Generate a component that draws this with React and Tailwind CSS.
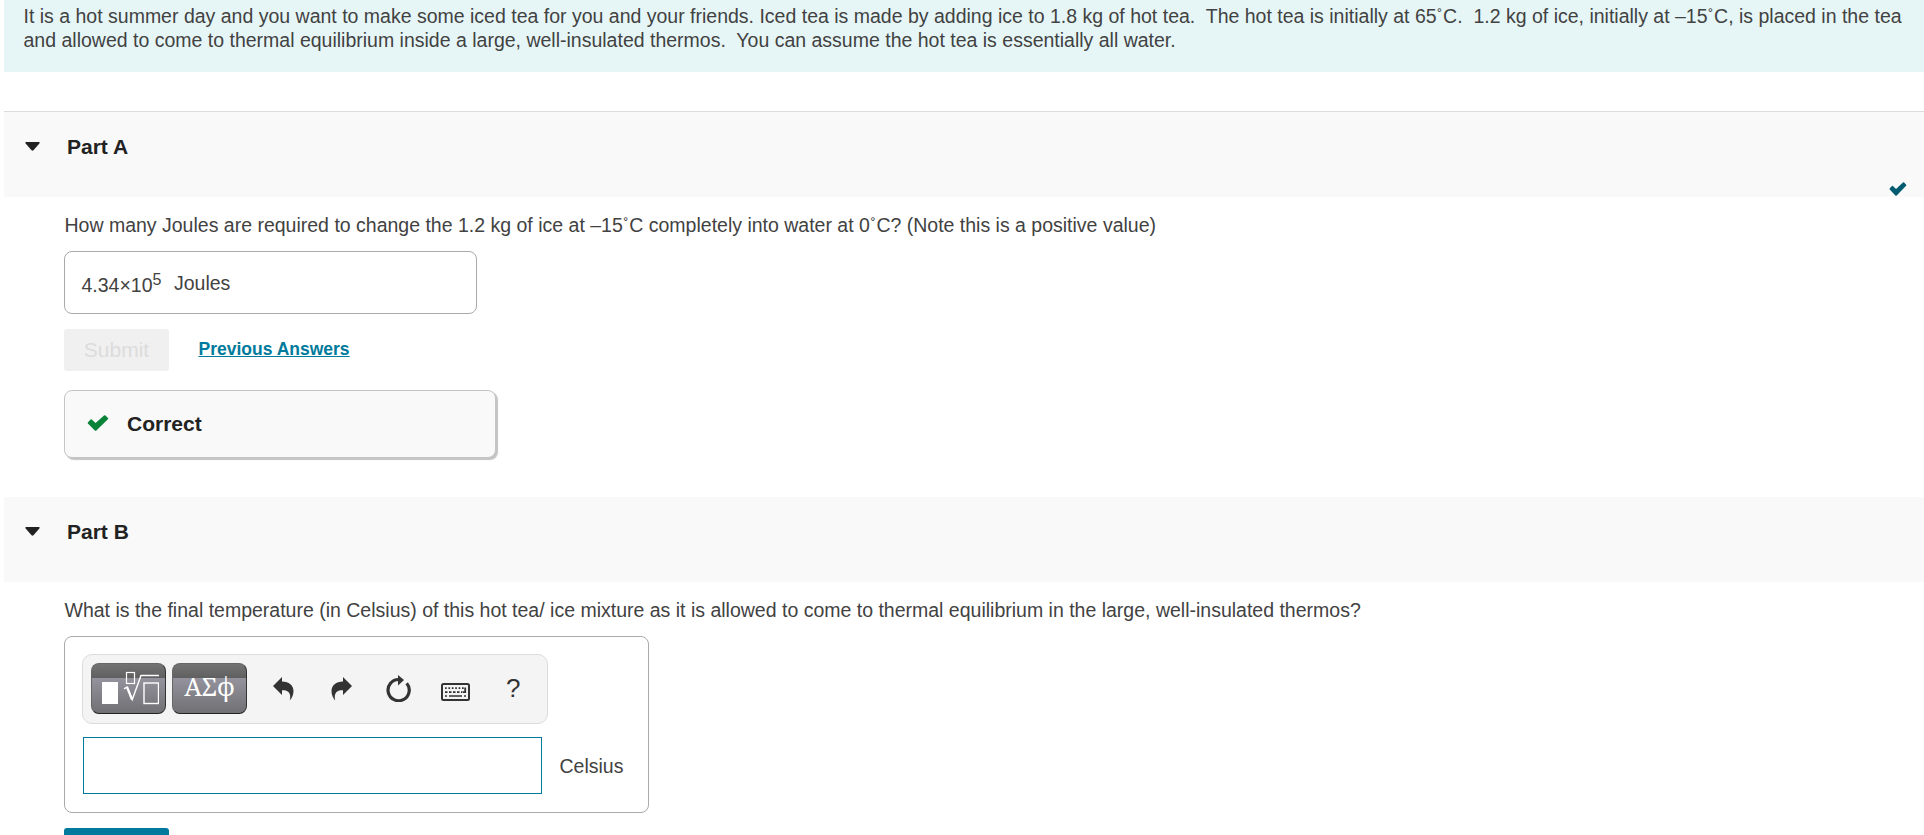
function CheckIcon({ className }) {
  return (
    <svg className={className} viewBox="0 0 22 16" preserveAspectRatio="none" fill="currentColor">
      <path d="M1 7.2 3.6 4.6Q4.2 4.1 4.8 4.6L8.6 8 17 .5Q17.8-.1 18.5.5L21 3Q21.5 3.6 20.9 4.2L9.4 15.5Q8.6 16.2 7.8 15.5L.9 8.5Q.4 7.8 1 7.2Z" />
    </svg>
  );
}

function UndoIcon({ className }) {
  return (
    <svg className={className} viewBox="0 0 21 24" fill="#333">
      <path d="M0 9 9 0V4.500C16 4.500 20.500 8.500 20.500 14 20.500 18 19 21 16.800 23.500 17.800 19.500 17 16.500 15.500 15 14 13.500 12 13.200 9 13.200V18Z" />
    </svg>
  );
}

function ResetIcon() {
  return (
    <svg className="h-[27px] w-[25px]" viewBox="0 0 25 27">
      <path d="M13 4.500A10.600 10.600 0 1 0 20.700 8.200" fill="none" stroke="#333" strokeWidth="3.200" />
      <path d="M12 0 18 5 12 10.500Z" fill="#333" />
    </svg>
  );
}

function KeyboardIcon() {
  return (
    <svg className="h-[18px] w-[29px]" viewBox="0 0 29 18" fill="none" stroke="#333">
      <rect x="1" y="1" width="27" height="16" rx="1.500" strokeWidth="2" />
      <path d="M4 5.200H23" strokeWidth="1.700" strokeDasharray="1.700 1.700" />
      <path d="M4 9.200H21" strokeWidth="1.700" strokeDasharray="2.500 1.500" />
      <path d="M4 13H6M8 13H21M23 13H25" strokeWidth="1.700" />
      <path d="M24.200 4.400V9.200H21.500" strokeWidth="1.800" />
    </svg>
  );
}

function TemplateIcon() {
  return (
    <svg className="h-[34px] w-[58px]" viewBox="0 0 58 34" fill="none" stroke="#fff">
      <rect x="1" y="11" width="16" height="22" fill="#fff" stroke="none" />
      <rect x="25.500" y="1.500" width="8" height="11" strokeWidth="1.200" />
      <path d="M23 17.800 26 16 31.300 28.500 40 4.500H58" strokeWidth="1.400" />
      <path d="M26 16 31 28.500" strokeWidth="2.200" />
      <rect x="43" y="12" width="14.500" height="20.500" strokeWidth="1.400" />
    </svg>
  );
}

function PartHeader({ title, done, className }) {
  return (
    <div className={`flex bg-[#f9f9f9] pl-[21px] pr-[17px] ${className}`}>
      <svg className="mt-[30px] h-[9px] w-[15px]" viewBox="0 0 16 9" preserveAspectRatio="none" fill="#222">
        <path d="M1.200 0H14.800Q16.200.3 15.300 1.500L9 8.300Q8 9.200 7 8.300L.7 1.500Q-.2.3 1.200 0Z" />
      </svg>
      <h2 className="ml-[27px] mt-[23px] text-[21px] leading-6 font-bold text-[#222]">{title}</h2>
      {done && <CheckIcon className="mt-[70px] ml-auto h-[14px] w-[18px] text-[#005a70]" />}
    </div>
  );
}

function Deg() {
  return <span className="relative -top-[3px] inline-block w-[6.500px] text-center text-[15px] leading-none">˚</span>;
}

const MATH_BUTTON =
  "flex h-[51px] w-[75px] justify-center rounded-lg border border-t-[#666] border-l-[#666] border-r-[#333] border-b-[#222] bg-linear-[180deg,#737373_0%,#606060_28%,#94939d_29%,#717074_100%] text-white";

function App() {
  return (
    <div className="h-[835px] overflow-hidden bg-white pl-1 font-['Liberation_Sans',Arial,sans-serif] text-[19.500px] leading-6 text-[#424242]">
      <div className="h-[72px] bg-[#e6f6f7] pt-1 pl-[19.500px] whitespace-nowrap">
        <p>
          It is a hot summer day and you want to make some iced tea for you and your friends. Iced tea is made by adding ice to 1.8 kg of hot tea.&nbsp; The hot tea is initially at 65<Deg />C.&nbsp; 1.2 kg of ice, initially at –15<Deg />C, is placed in the tea
        </p>
        <p>
          and allowed to come to thermal equilibrium inside a large, well-insulated thermos.&nbsp; You can assume the hot tea is essentially all water.
        </p>
      </div>

      <PartHeader title="Part A" done className="mt-[39px] h-[86px] border-t border-[#dcdcdc]" />
      <div className="pl-[60px]">
        <p className="pt-4 pl-[.5px]">
          How many Joules are required to change the 1.2 kg of ice at –15<Deg />C completely into water at 0<Deg />C? (Note this is a positive value)
        </p>
        <div className="mt-[14px] flex h-[63px] w-[413px] items-center rounded-lg border border-[#aaa] pl-[16.500px]">
          <span className="mt-1">
            4.34×10<span className="relative -top-[7px] text-base leading-none">5</span>
          </span>
          <span className="ml-[12.500px]">Joules</span>
        </div>
        <div className="mt-[15px] flex">
          <button className="h-[42px] w-[105px] rounded-[3px] bg-[#f0f0f0] text-[21px] text-[#dcdcdc]">Submit</button>
          <a className="ml-[29.500px] mt-2 text-[17.500px] leading-6 font-bold text-[#007a9c] underline" href="#">Previous Answers</a>
        </div>
        <div className="mt-[19px] flex h-[68px] w-[432px] items-center rounded-lg border border-[#c4c4c4] bg-[#f9f9f9] pl-[21.500px] shadow-[2px_2px_1px_#c4c4c4]">
          <CheckIcon className="-mt-0.5 h-4 w-[22px] text-[#0a8339]" />
          <span className="ml-[18.500px] text-[21px] font-bold text-[#222]">Correct</span>
        </div>
      </div>

      <PartHeader title="Part B" className="mt-[39px] h-[85px]" />
      <div className="pl-[60px]">
        <p className="pt-4 pl-[.5px]">
          What is the final temperature (in Celsius) of this hot tea/ ice mixture as it is allowed to come to thermal equilibrium in the large, well-insulated thermos?
        </p>
        <div className="mt-[14px] h-[177px] w-[585px] rounded-lg border border-[#aaa] pt-[17px] pl-[17px]">
          <div className="flex h-[70px] w-[466px] rounded-[10px] border border-[#dcdcdc] bg-[#f4f4f4] pt-2 pl-2">
            <button className={MATH_BUTTON}>
              <span className="mt-[7px] ml-[3px]"><TemplateIcon /></span>
            </button>
            <button className={`${MATH_BUTTON} ml-[6px] pt-2 font-['Noto_Serif','Liberation_Serif',serif] text-[25px] leading-7`}>
              ΑΣϕ
            </button>
            <UndoIcon className="mt-[14px] ml-[26px] h-6 w-[21px]" />
            <UndoIcon className="mt-[14px] ml-[37px] h-6 w-[21px] -scale-x-100" />
            <span className="mt-3 ml-[34px]"><ResetIcon /></span>
            <span className="mt-5 ml-[30px]"><KeyboardIcon /></span>
            <span className="mt-[11px] ml-[36px] text-[26px] leading-7 text-[#333]">?</span>
          </div>
          <div className="mt-[13px] flex items-center">
            <input className="ml-px h-[57px] w-[459px] border border-[#007a9c] bg-white outline-none" />
            <span className="ml-[17.500px]">Celsius</span>
          </div>
        </div>
        <div className="mt-[15px] h-[42px] w-[105px] rounded-[3px] bg-[#007a9c]" />
      </div>
    </div>
  );
}

export default App;
